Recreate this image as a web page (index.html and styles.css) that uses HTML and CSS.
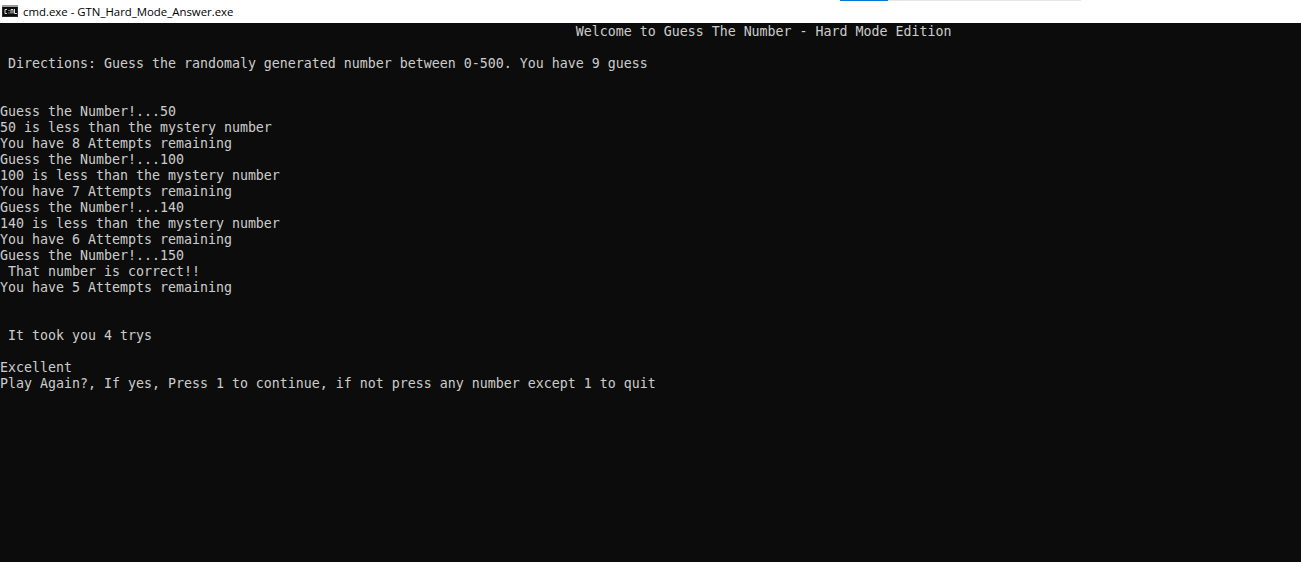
FILE: index.html
```html
<!DOCTYPE html>
<html lang="en">
<head>
<meta charset="utf-8">
<title>cmd.exe - GTN_Hard_Mode_Answer.exe</title>
<link rel="stylesheet" href="styles.css">
</head>
<body>
<div class="window">
  <header class="titlebar">
    <svg class="app-icon" width="16" height="16" viewBox="0 0 16 16" aria-hidden="true">
      <rect x="0" y="2" width="16" height="12" fill="#2a2a2a"/>
      <rect x="0" y="2" width="16" height="2" fill="#9a9a9a"/>
      <rect x="1" y="4" width="14" height="9" fill="#0c0c0c"/>
      <path d="M5 6.500H3V10.500H5M7 7V8M7 9.500V10.500M9 10.500V6.500H11V10.500M12.500 6V10.500H15" fill="none" stroke="#e0e0e0" stroke-width="1"/>
    </svg>
    <span class="title-text">cmd.exe - GTN_Hard_Mode_Answer.exe</span>
    <div class="progress"><span class="progress-fill"></span></div>
  </header>
  <pre class="console">                                                                        Welcome to Guess The Number - Hard Mode Edition

 Directions: Guess the randomaly generated number between 0-500. You have 9 guess


Guess the Number!...50
50 is less than the mystery number
You have 8 Attempts remaining
Guess the Number!...100
100 is less than the mystery number
You have 7 Attempts remaining
Guess the Number!...140
140 is less than the mystery number
You have 6 Attempts remaining
Guess the Number!...150
 That number is correct!!
You have 5 Attempts remaining


 It took you 4 trys

Excellent
Play Again?, If yes, Press 1 to continue, if not press any number except 1 to quit</pre>
</div>
</body>
</html>
```
FILE: styles.css
```css
html, body {
  margin: 0;
  padding: 0;
  height: 100%;
  overflow: hidden;
  background: #0c0c0c;
}
.window {
  display: flex;
  flex-direction: column;
  height: 562px;
}
.titlebar {
  display: flex;
  align-items: center;
  flex: 0 0 23px;
  height: 23px;
  box-sizing: border-box;
  padding: 0 0 1px 2px;
  background: #fff;
  position: relative;
}
.app-icon {
  flex: none;
  margin-right: 5px;
}
.title-text {
  font-family: "Open Sans", "Noto Sans", sans-serif;
  font-size: 11.4px;
  color: #000;
  white-space: nowrap;
}
.progress {
  position: absolute;
  top: 0;
  left: 840px;
  width: 241px;
  height: 1px;
  background: #e6e6e6;
}
.progress-fill {
  display: block;
  width: 48px;
  height: 100%;
  background: #0078d7;
}
.console {
  flex: 1;
  margin: 0;
  padding-top: 1px;
  background: #0c0c0c;
  color: #cccccc;
  font-family: "DejaVu Sans Mono", "Liberation Mono", monospace;
  font-size: 13.29px;
  line-height: 16px;
  white-space: pre;
}
```
